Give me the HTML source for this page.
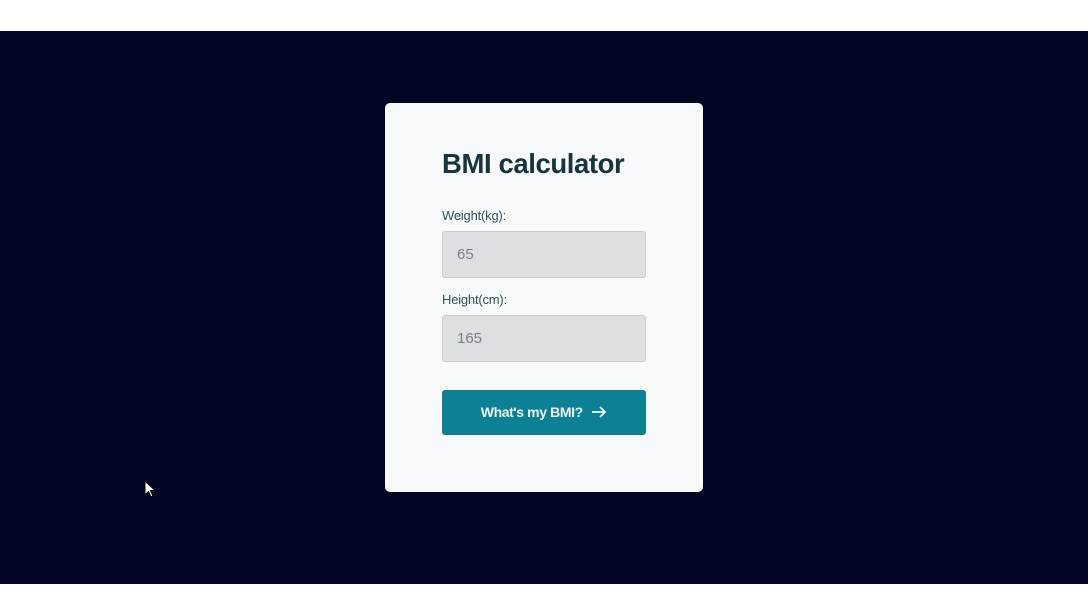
<!DOCTYPE html>
<html><head><style>
html,body{margin:0;padding:0;width:1088px;height:614px;background:#fff;overflow:hidden;font-family:"Liberation Sans",sans-serif}
.band{position:absolute;left:0;top:31px;width:1088px;height:553px;background:#020624}
.card{position:absolute;left:385px;top:103px;width:318px;height:389px;background:#f8f9fa;border-radius:5px}
h1{position:absolute;left:57px;top:45px;margin:0;font-size:27.5px;font-weight:bold;color:#16353f;letter-spacing:-0.4px}
.lab{position:absolute;left:57px;font-size:13px;color:#2e5257;letter-spacing:-0.2px}
.inp{position:absolute;left:57px;width:204px;height:47px;background:#dde0e3;border:1px solid #c8cbcf;border-radius:3px;box-sizing:border-box;font-size:15px;color:#7a7f84;padding:14px 0 0 14px}
.btn{position:absolute;left:57px;top:287px;width:204px;height:45px;background:#0c8195;border-radius:3px;color:#f0f4f5;font-weight:bold;font-size:14px;letter-spacing:-0.4px;text-align:center;line-height:45px}
</style></head><body>
<div class="band"></div>
<div class="card">
<h1>BMI calculator</h1>
<div class="lab" style="top:105px">Weight(kg):</div>
<div class="inp" style="top:128px">65</div>
<div class="lab" style="top:189px">Height(cm):</div>
<div class="inp" style="top:212px">165</div>
<div class="btn">What's my BMI? <svg width="16" height="12" viewBox="0 0 16 12" style="vertical-align:-1px;margin-left:5px"><path d="M1 6H14M9 1l5 5-5 5" stroke="#f0f4f5" stroke-width="1.8" fill="none"/></svg></div>
</div>
<svg style="position:absolute;left:144px;top:480px" width="12" height="18" viewBox="0 0 12 18"><path d="M1 1V15L4.5 11.5L7 17L9 16L6.5 10.5H11Z" fill="#fff" stroke="#000" stroke-width="1"/></svg>
</body></html>
